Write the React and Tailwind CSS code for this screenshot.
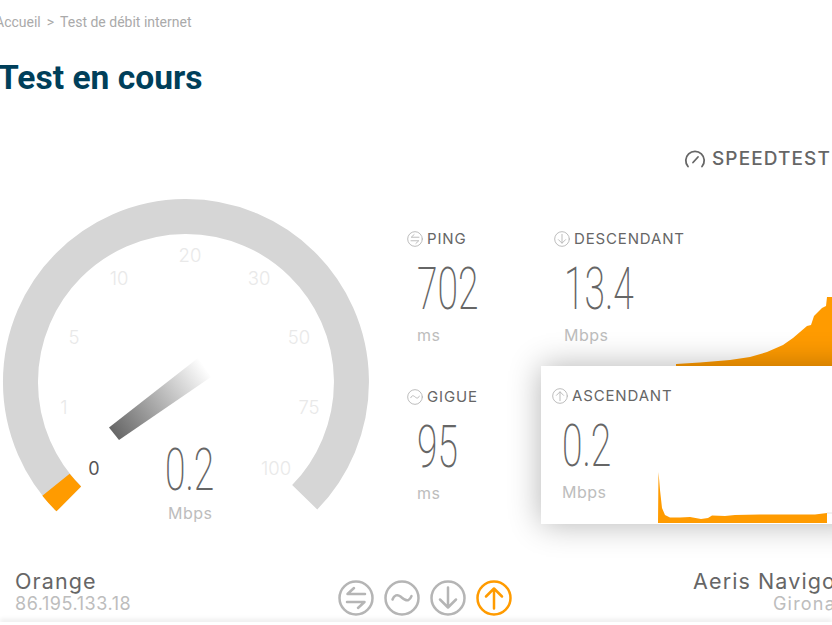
import React from "react";

const ORANGE = "#ff9b00";

function CircleIcon({ kind, size = 16, color = "#b5b5b5", sw = 1 }) {
  return (
    <svg width={size} height={size} viewBox="0 0 36 36" fill="none" stroke={color} strokeWidth={sw} strokeLinecap="round" strokeLinejoin="round" className="shrink-0">
      <circle cx="18" cy="18" r="16.5" />
      {kind === "ping" && (
        <>
          <path d="M27 14H9.5L16 8" />
          <path d="M9 22H26.5L20 28" />
        </>
      )}
      {kind === "jitter" && <path d="M8.5 19.5C10 15 13.5 14 16.5 16.5S22 21.5 24.5 20 27 17 27.5 16" />}
      {kind === "down" && <path d="M18 7.5V27M10 19.5L18 27.5L26 19.5" />}
      {kind === "up" && <path d="M18 28.5V9M10 16.5L18 8.5L26 16.5" />}
    </svg>
  );
}

function BigNumber({ value, className = "" }) {
  return (
    <div
      className={
        "origin-left scale-x-[0.62] whitespace-nowrap font-['Roboto',sans-serif] text-[60px] leading-[60px] font-extralight text-[#666] " +
        className
      }
    >
      {value}
    </div>
  );
}

function Metric({ icon, label, value, unit, className = "" }) {
  return (
    <div className={"flex h-[158px] flex-col " + className}>
      <div className="flex items-center gap-[4px]">
        <CircleIcon kind={icon} sw={2} />
        <span className="text-[15px] leading-[18px] tracking-[0.85px] text-[#666]">{label}</span>
      </div>
      <BigNumber value={value} className="mt-[11px] ml-[10px]" />
      <div className="mt-[6px] ml-[10px] text-[16px] leading-[20px] tracking-[0.5px] text-[#bdbdbd]">{unit}</div>
    </div>
  );
}

function Gauge() {
  const ticks = [
    ["1", 64, 414],
    ["5", 74, 344],
    ["10", 119, 285],
    ["20", 190, 262],
    ["30", 259, 285],
    ["50", 299, 344],
    ["75", 309, 414],
    ["100", 276, 475],
  ];
  return (
    <div className="relative h-[340px] w-[396px] shrink-0">
      <svg width="396" height="340" viewBox="0 190 396 340" className="block">
        <defs>
          <linearGradient id="needle" gradientUnits="userSpaceOnUse" x1="114" y1="434" x2="205" y2="367">
            <stop offset="0" stopColor="#666" />
            <stop offset="1" stopColor="#666" stopOpacity="0" />
          </linearGradient>
        </defs>
        <path d="M 68.8 498.9 A 165.5 165.5 0 1 1 304.7 497.3" fill="none" stroke="#d6d6d6" strokeWidth="35" />
        <path d="M 68.8 498.9 A 165.5 165.5 0 0 1 56 484.7" fill="none" stroke={ORANGE} strokeWidth="35" />
        <polygon points="109,427.5 119,440 211,377 198,358" fill="url(#needle)" />
        {ticks.map(([t, x, y]) => (
          <text key={t} x={x} y={y} textAnchor="middle" fontSize="18.5" fill="#e9e9e9" fontFamily="Inter, sans-serif" fontWeight="300">
            {t}
          </text>
        ))}
        <text x="94" y="475" textAnchor="middle" fontSize="18" fill="#555" fontFamily="Inter, sans-serif">
          0
        </text>
      </svg>
      <div className="absolute top-[250px] left-[165px]">
        <BigNumber value="0.2" />
      </div>
      <div className="absolute top-[313px] left-[168px] text-[16px] leading-[20px] tracking-[0.5px] text-[#bdbdbd]">Mbps</div>
    </div>
  );
}

export default function App() {
  return (
    <div className="relative flex h-[625px] w-[832px] flex-col overflow-hidden bg-white font-['Inter',sans-serif]">
      <div className="-ml-[3px] h-[190px] shrink-0 font-['Roboto',sans-serif]">
        <div className="-ml-[2px] flex gap-[6px] pt-[14px] text-[14px] leading-[16px] text-[#aaa]">
          <span>Accueil</span>
          <span>&gt;</span>
          <span>Test de débit internet</span>
        </div>
        <h1 className="mt-[29px] ml-[1px] text-[33.6px] leading-[38px] font-bold text-[#003f5a]">Test en cours</h1>
        <div className="mt-[51px] ml-[687px] flex items-center gap-[6px] whitespace-nowrap font-['Inter',sans-serif] text-[19px] leading-[22px] font-medium tracking-[1.1px] text-[#666]">
          <svg width="22" height="20" viewBox="0 0 22 20" fill="none" stroke="#666" strokeWidth="1.8" strokeLinecap="round">
            <path d="M4 17.5A9.2 9.2 0 1 1 18 17.5" />
            <path d="M9 13.5L14 8" />
          </svg>
          SPEEDTEST
        </div>
      </div>

      <div className="flex h-[379px] shrink-0 items-start">
        <Gauge />
        <div className="mt-[18px] grid w-[436px] grid-cols-[145px_291px]">
          <Metric icon="ping" label="PING" value="702" unit="ms" className="pt-[22px] pl-[11px]" />
          <div className="relative h-[158px]">
            <Metric icon="down" label="DESCENDANT" value="13.4" unit="Mbps" className="pt-[22px] pl-[13px]" />
            <svg width="160" height="70" viewBox="672 296 160 70" className="absolute right-0 bottom-0">
              <path
                d="M676 364 L700 362.5 L730 360 L750 357 L767 352 L783 345 L793 338 L800 332 L807 326 L811 325 L814 316 L822 308 L826 306 L827 297 L832 297 L832 366 L676 366 Z"
                fill={ORANGE}
              />
            </svg>
          </div>
          <Metric icon="jitter" label="GIGUE" value="95" unit="ms" className="pt-[22px] pl-[11px]" />
          <div className="relative z-10 w-[320px] bg-white shadow-[0_0_30px_rgba(0,0,0,0.3)]">
            <Metric icon="up" label="ASCENDANT" value="0.2" unit="Mbps" className="pt-[21px] pl-[11px]" />
            <svg width="177" height="54" viewBox="655 470 177 54" className="absolute bottom-0 left-[114px]">
              <path
                d="M658 523 L658.5 472 L660 490 L662 508 L665 515 L670 517.5 L680 517.5 L690 517 L701 519 L708 518 L712 515.5 L725 516 L735 515 L760 514.5 L790 514.5 L815 514.5 L827 513 L827 523 Z"
                fill={ORANGE}
              />
              <path d="M827 513H832" stroke="#e4e4e4" strokeWidth="1" />
            </svg>
          </div>
        </div>
      </div>

      <div className="flex items-start">
        <div className="ml-[15px] w-[323px]">
          <div className="text-[21.5px] leading-[24px] tracking-[1.1px] text-[#666]">Orange</div>
          <div className="text-[18px] leading-[22px] tracking-[0.55px] text-[#bdbdbd]">86.195.133.18</div>
        </div>
        <div className="mt-[11px] flex gap-[10px]">
          <CircleIcon kind="ping" size={36} sw={2.5} />
          <CircleIcon kind="jitter" size={36} sw={2.5} />
          <CircleIcon kind="down" size={36} sw={2.5} />
          <CircleIcon kind="up" size={36} sw={2.5} color={ORANGE} />
        </div>
        <div className="ml-auto -mr-[4px] text-right whitespace-nowrap">
          <div className="text-[21.5px] leading-[24px] tracking-[1.1px] text-[#666]">Aeris Navigo</div>
          <div className="text-[18px] leading-[22px] tracking-[1.2px] text-[#bdbdbd]">Girona</div>
        </div>
      </div>
      <div className="absolute right-0 bottom-0 left-0 h-[3px] bg-white shadow-[0_-2px_5px_rgba(0,0,0,0.12)]" />
    </div>
  );
}
